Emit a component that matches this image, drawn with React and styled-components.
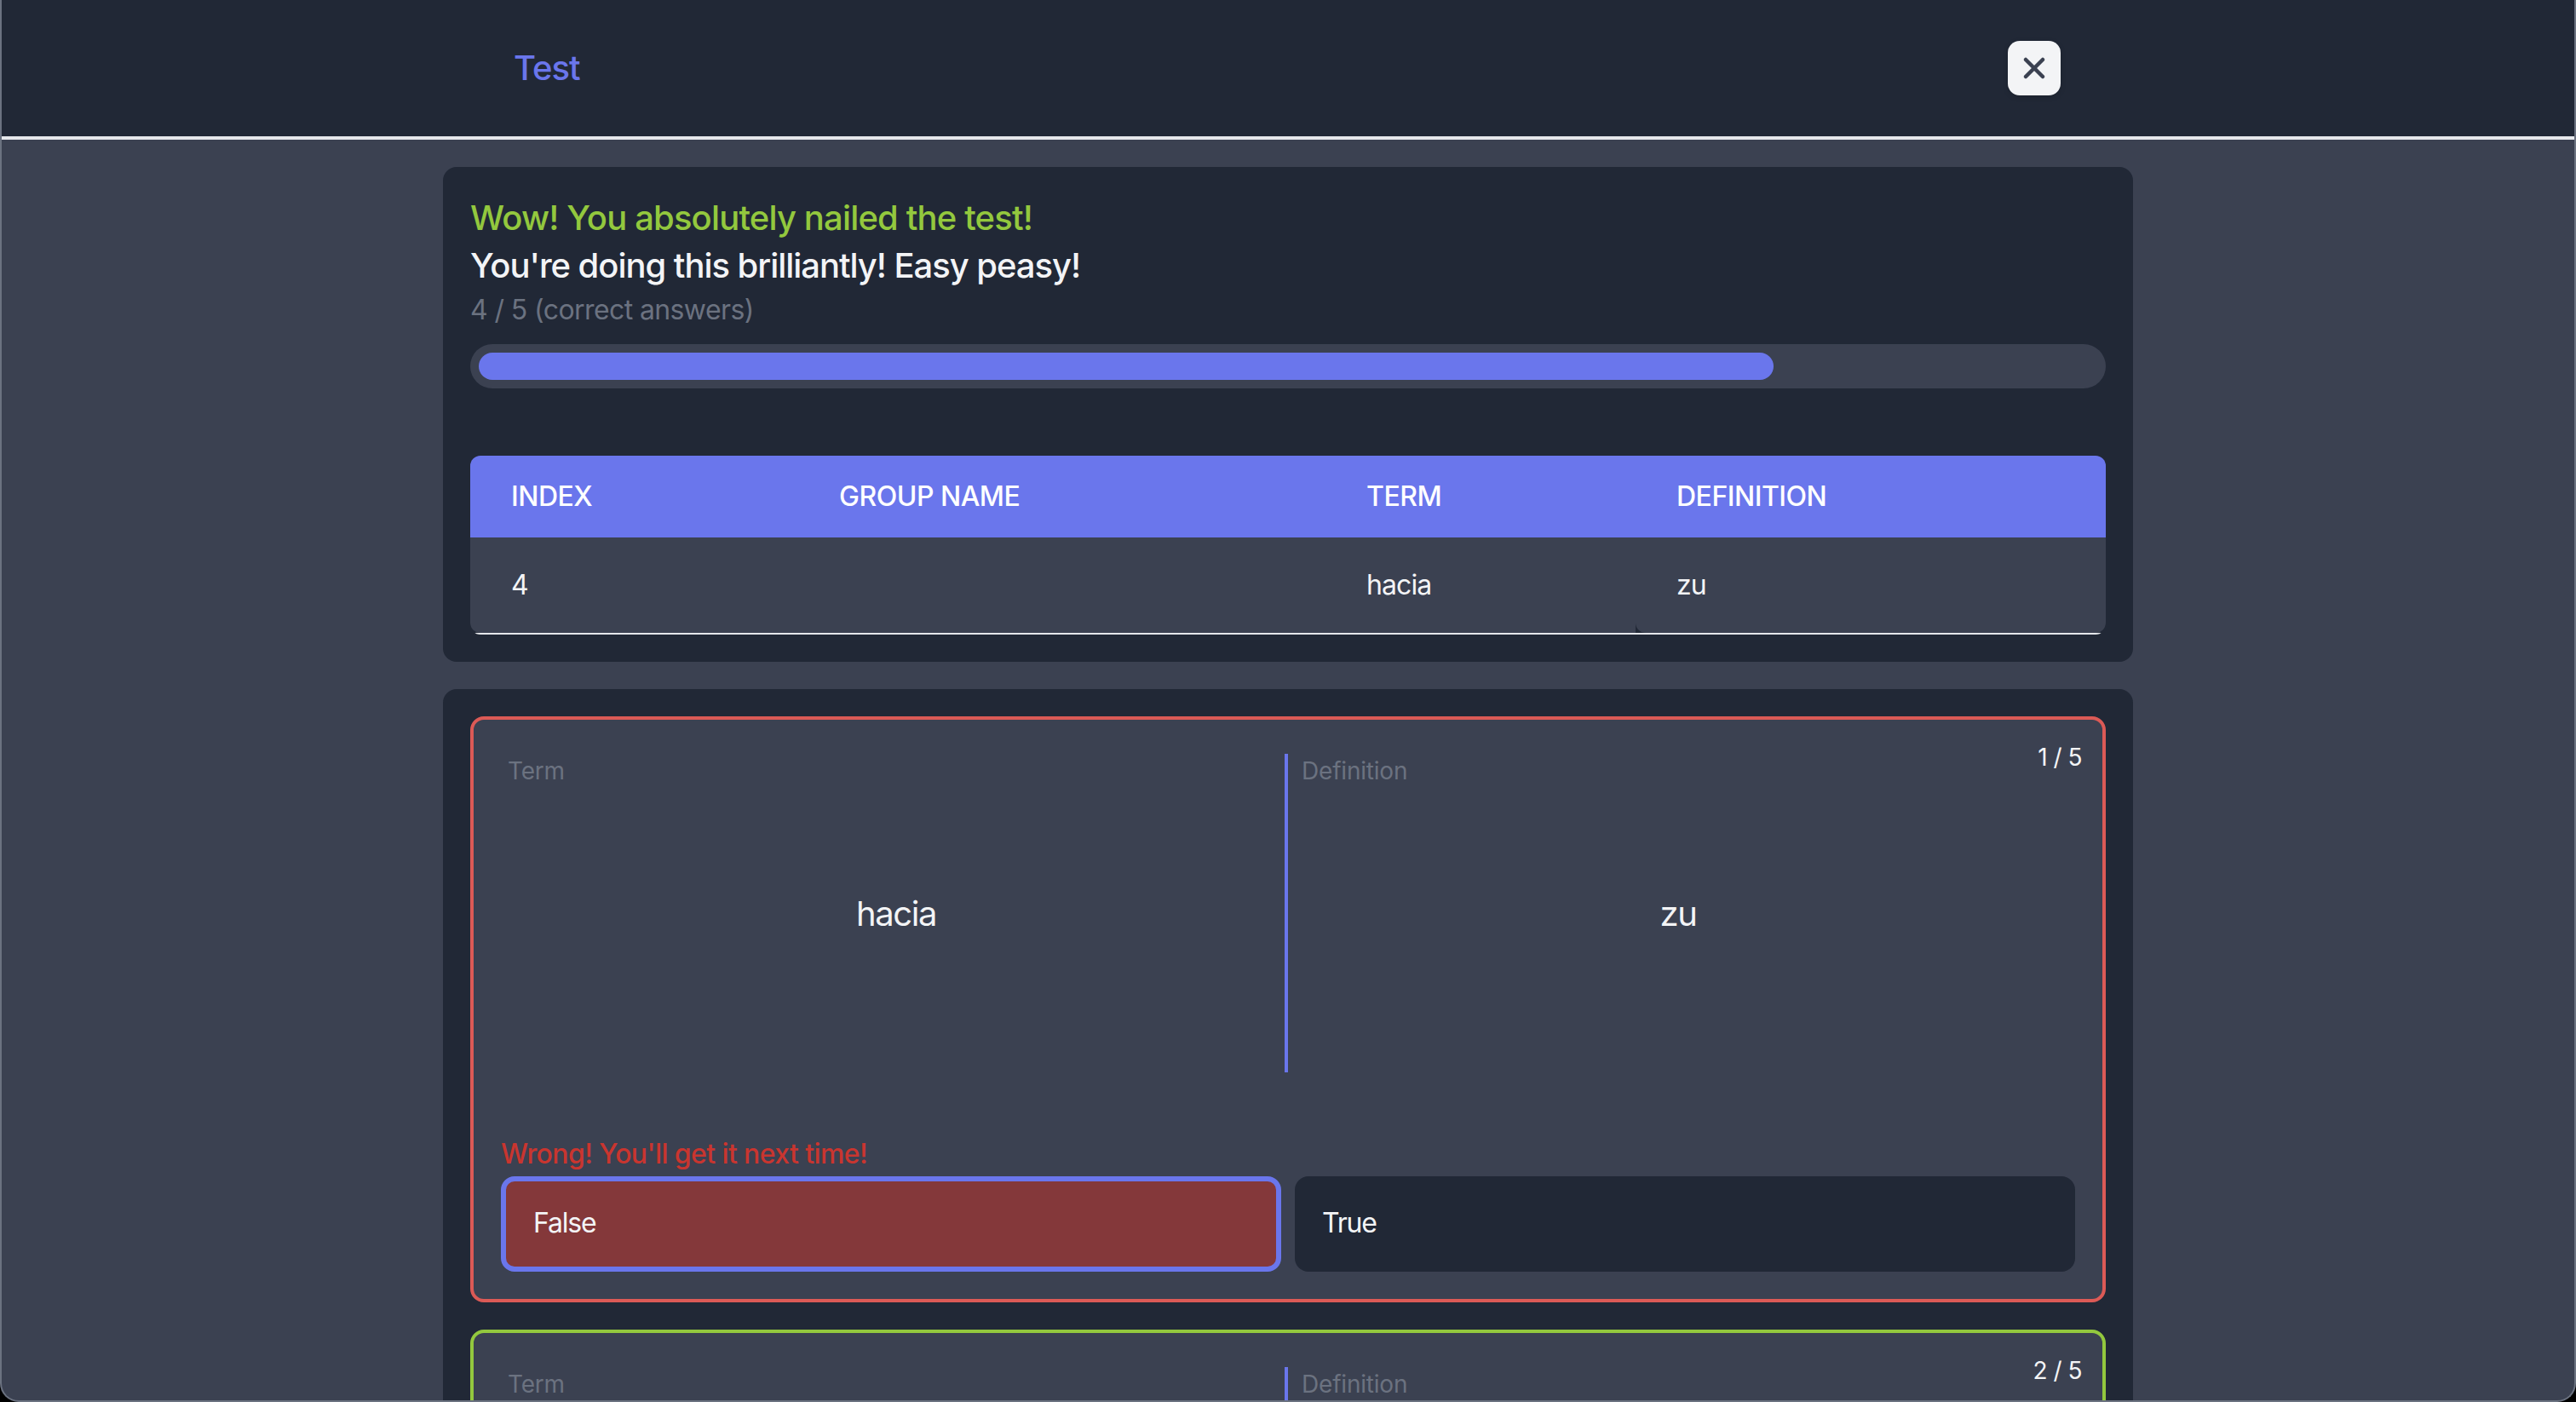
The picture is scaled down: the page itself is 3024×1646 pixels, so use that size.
import React from "react";
import styled, { createGlobalStyle } from "styled-components";
import { X } from "lucide-react";

const GlobalStyle = createGlobalStyle`
  * {
    box-sizing: border-box;
  }
  html, body {
    margin: 0;
    padding: 0;
    background: #000;
    overflow: hidden;
  }
  body {
    font-family: "Inter", "Lato", sans-serif;
    color: #f3f4f6;
  }
`;

const Frame = styled.div`
  width: 3024px;
  height: 1646px;
  background: #3b4151;
  border: 2px solid #6b7280;
  border-top: 0;
  border-radius: 0 0 22px 22px;
  overflow: hidden;
`;

const Header = styled.header`
  height: 164px;
  background: #212836;
  border-bottom: 4px solid #e5e7eb;
  display: flex;
  justify-content: center;
`;

const HeaderInner = styled.div`
  width: 1814px;
  display: flex;
  align-items: center;
  justify-content: space-between;
`;

const PageTitle = styled.h1`
  margin: 0 0 0 -2px;
  font-size: 40px;
  line-height: 56px;
  font-weight: 500;
  letter-spacing: -1px;
  color: #6a76ec;
`;

const CloseButton = styled.button`
  width: 62px;
  height: 64px;
  padding: 0;
  border: 0;
  border-radius: 14px;
  background: #f3f4f6;
  color: #3b4151;
  display: flex;
  align-items: center;
  justify-content: center;
  box-shadow: 0 2px 6px rgba(0, 0, 0, 0.15);
`;

const Main = styled.main`
  width: 1984px;
  margin: 32px auto 0;
  display: flex;
  flex-direction: column;
  gap: 32px;
`;

const Panel = styled.section`
  background: #212836;
  border-radius: 16px;
  padding: 32px;
`;

const Headline = styled.div`
  font-size: 40px;
  line-height: 56px;
  font-weight: 500;
  letter-spacing: ${(props) => props.$spacing};
  color: ${(props) => props.color};
`;

const ScoreText = styled.div`
  font-size: 32px;
  line-height: 48px;
  letter-spacing: -0.6px;
  color: #6b7280;
`;

const Track = styled.div`
  height: 52px;
  margin: 16px 0 79px;
  padding: 10px;
  border-radius: 26px;
  background: #3b4151;
`;

const Fill = styled.div`
  height: 32px;
  border-radius: 16px;
  background: #6a76ec;
`;

const TableWrap = styled.div`
  border-radius: 12px;
  overflow: hidden;
`;

const TableRow = styled.div`
  display: grid;
  grid-template-columns: 385px 619px 364px 1fr;
  background: ${(props) => (props.$head ? "#6a76ec" : "transparent")};
  height: ${(props) => (props.$head ? "96px" : "114px")};
  border-bottom: ${(props) => (props.$head ? "0" : "2px solid #e5e7eb")};
`;

const HeadCell = styled.div`
  padding: 0 48px 2px;
  display: flex;
  align-items: center;
  font-size: 32px;
  font-weight: 500;
  letter-spacing: -0.5px;
  color: #fff;
  text-transform: uppercase;
`;

const BodyCell = styled.div`
  padding: 0 48px 2px;
  display: flex;
  align-items: center;
  font-size: 32px;
  letter-spacing: -0.9px;
  background: #3b4151;
  color: #f3f4f6;
  border-bottom-left-radius: ${(props) => (props.$rounded ? "12px" : "0")};
  border-bottom-right-radius: ${(props) => (props.$last ? "12px" : "0")};
`;

const QuestionList = styled.div`
  display: flex;
  flex-direction: column;
  gap: 32px;
`;

const Card = styled.article`
  position: relative;
  background: #3b4151;
  border: 4px solid ${(props) => props.color};
  border-radius: 16px;
  padding: 40px 32px 32px;
`;

const Counter = styled.span`
  position: absolute;
  top: 24px;
  right: 24px;
  font-size: 28px;
  line-height: 40px;
  letter-spacing: -0.5px;
  color: #f3f4f6;
`;

const Sides = styled.div`
  display: grid;
  grid-template-columns: 1fr 1fr;
  height: 374px;
  padding: 0 8px;
`;

const Side = styled.div`
  display: flex;
  flex-direction: column;
  border-right: ${(props) => (props.$divider ? "4px solid #6a76ec" : "0")};
`;

const SideLabel = styled.div`
  font-size: 28px;
  line-height: 40px;
  letter-spacing: -0.2px;
  color: #6b7280;
  padding-left: ${(props) => (props.$inset ? "16px" : "0")};
`;

const SideValue = styled.div`
  flex: 1;
  padding-bottom: 40px;
  display: flex;
  align-items: center;
  justify-content: center;
  font-size: 40px;
  letter-spacing: -1.4px;
  color: #f3f4f6;
`;

const Feedback = styled.div`
  margin-top: 72px;
  font-size: 32px;
  line-height: 48px;
  font-weight: 500;
  letter-spacing: -0.6px;
  color: #c9352f;
  margin-bottom: 2px;
`;

const Answers = styled.div`
  display: grid;
  grid-template-columns: 1fr 1fr;
  gap: 16px;
`;

const Answer = styled.button`
  height: 112px;
  padding: 0 32px 3px;
  display: flex;
  align-items: center;
  border: ${(props) => (props.$selected ? "6px solid #6a76ec" : "0")};
  border-radius: 16px;
  background: ${(props) => (props.$selected ? "#84383a" : "#212836")};
  color: #f3f4f6;
  font-family: inherit;
  font-size: 32px;
  letter-spacing: -1.2px;
`;

const questions = [
  { id: 1, term: "hacia", definition: "zu", color: "#dc5a56", feedback: "Wrong! You'll get it next time!" },
  { id: 2, term: "", definition: "", color: "#93c83e" },
];

const App = () => (
  <Frame>
    <GlobalStyle />
    <Header>
      <HeaderInner>
        <PageTitle>Test</PageTitle>
        <CloseButton aria-label="Close">
          <X size={40} strokeWidth={2.75} />
        </CloseButton>
      </HeaderInner>
    </Header>
    <Main>
      <Panel>
        <Headline color="#93c83e" $spacing="-0.85px">Wow! You absolutely nailed the test!</Headline>
        <Headline color="#f3f4f6" $spacing="-1.05px">You're doing this brilliantly! Easy peasy!</Headline>
        <ScoreText>4 / 5 (correct answers)</ScoreText>
        <Track>
          <Fill style={{ width: `${(4 / 5) * 100}%` }} />
        </Track>
        <TableWrap>
          <TableRow $head>
            <HeadCell>Index</HeadCell>
            <HeadCell>Group name</HeadCell>
            <HeadCell>Term</HeadCell>
            <HeadCell>Definition</HeadCell>
          </TableRow>
          <TableRow>
            <BodyCell $rounded>4</BodyCell>
            <BodyCell />
            <BodyCell>hacia</BodyCell>
            <BodyCell $rounded $last>zu</BodyCell>
          </TableRow>
        </TableWrap>
      </Panel>
      <Panel>
        <QuestionList>
          {questions.map((q) => (
            <Card key={q.id} color={q.color}>
              <Counter>{q.id} / 5</Counter>
              <Sides>
                <Side $divider>
                  <SideLabel>Term</SideLabel>
                  <SideValue>{q.term}</SideValue>
                </Side>
                <Side>
                  <SideLabel $inset>Definition</SideLabel>
                  <SideValue>{q.definition}</SideValue>
                </Side>
              </Sides>
              {q.feedback && <Feedback>{q.feedback}</Feedback>}
              <Answers>
                <Answer $selected>False</Answer>
                <Answer>True</Answer>
              </Answers>
            </Card>
          ))}
        </QuestionList>
      </Panel>
    </Main>
  </Frame>
);

export default App;
